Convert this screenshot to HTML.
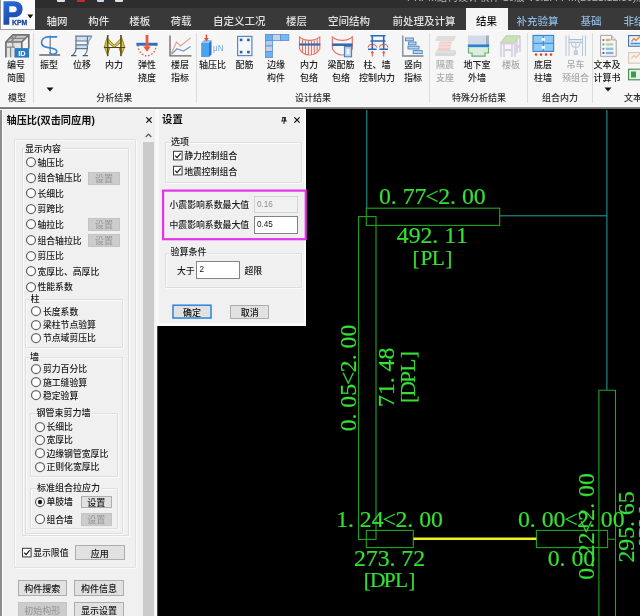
<!DOCTYPE html>
<html lang="zh-CN"><head><meta charset="utf-8"><title>PKPM</title>
<style>
html,body{margin:0;padding:0;background:#000;}
#app{position:relative;transform:translateZ(0);will-change:transform;width:640px;height:616px;overflow:hidden;background:#000;font-family:"Liberation Sans","Noto Sans CJK SC",sans-serif;font-size:9px;color:#111;line-height:12px}
#app div,#app span,#app svg{position:absolute;box-sizing:border-box;white-space:nowrap}
.t{height:12px;line-height:12px;font-size:8.85px;color:#1a1a1a;font-weight:500}
.tab{top:14px;height:14px;line-height:14px;font-size:10.5px;color:#e2e2e2;font-weight:500}
.tabb{color:#8fb6df}
.rl{height:12px;line-height:12px;font-size:9px;color:#1c1c1c;text-align:center;font-weight:500}
.rl.dis{color:#a9a9a9}
.gl{top:91.5px;height:12px;line-height:12px;font-size:9px;color:#2e2e2e;font-weight:500;text-align:center}
.sep{top:33px;width:1px;height:70px;background:#dcdcdc}
.gb{border:1px solid #dedede;border-radius:1px;box-shadow:1px 1px 0 #fafafa, inset 1px 1px 0 #fafafa}
.lg{height:12px;line-height:12px;font-size:9px;color:#1a1a1a;background:#f0f0f0;padding:0 1px;font-weight:500}
.btn{border:1px solid #adadad;background:#e1e1e1;font-size:9px;text-align:center;color:#111;font-weight:500}
.btn.dis{background:#cccccc;border-color:#c4c4c4;color:#9a9a9a}
.btn.def{border-color:#e1e1e1}
.inp{border:1px solid #848484;background:#fff;font-size:8.2px;color:#111;padding-left:2.4px}
.inp.dis{background:#f0f0f0;border-color:#d4d4d4;color:#8e8e8e}
</style></head>
<body><div id="app">
<div style="left:0;top:0;width:640px;height:30px;background:#393939"></div>
<div style="left:0;top:0;width:640px;height:7.6px;background:#2d2d2d"></div>
<div style="left:407px;top:-10px;height:14px;line-height:14px;font-size:10.5px;color:#b4b4b4">PKPM结构设计软件 10版 V5.2.4 PM(2021.12.30)版本</div>
<div style="left:57px;top:-4px;width:7.5px;height:6.2px;background:#e0e0e0;border-radius:1px"></div>
<div style="left:77px;top:-4px;width:7.5px;height:6.2px;background:#c82a2a;border-radius:1px"></div>
<div style="left:96.5px;top:-4px;width:7.5px;height:6.2px;background:#c6d8ee;border-radius:1px"></div>
<div style="left:115px;top:-4px;width:7.5px;height:6.2px;background:#e0e0e0;border-radius:1px"></div>
<div style="left:0;top:0;width:34.6px;height:30px;background:#fbfbfb"></div>
<svg style="left:0;top:0" width="35" height="30" viewBox="0 0 35 30">
<defs><linearGradient id="lg1" x1="0" y1="0" x2="0.3" y2="1"><stop offset="0" stop-color="#2b78e0"/><stop offset="1" stop-color="#1a3fa6"/></linearGradient></defs>
<text x="2" y="24.3" font-family="Liberation Sans, sans-serif" font-weight="bold" font-size="32" fill="url(#lg1)" stroke="url(#lg1)" stroke-width="1.3" stroke-linejoin="miter" textLength="21" lengthAdjust="spacingAndGlyphs">P</text>
<text x="12" y="24.8" font-family="Liberation Sans, sans-serif" font-weight="bold" font-size="7.6" fill="#1c429f" stroke="#1c429f" stroke-width="0.3" textLength="15.3" lengthAdjust="spacingAndGlyphs">KPM</text>
<path d="M27.4 14.5 H33.2 L30.3 18.6 Z" fill="#111"/>
<path d="M0.5 0 V29.6 H34.6" stroke="#4a4a4a" stroke-width="1" fill="none" opacity=".55"/>
</svg>
<div class="tab" style="left:46.6px">轴网</div>
<div class="tab" style="left:88.2px">构件</div>
<div class="tab" style="left:129.3px">楼板</div>
<div class="tab" style="left:170.4px">荷载</div>
<div class="tab" style="left:213px">自定义工况</div>
<div class="tab" style="left:286px">楼层</div>
<div class="tab" style="left:328px">空间结构</div>
<div class="tab" style="left:392.5px">前处理及计算</div>
<div style="left:466px;top:8px;width:42px;height:23px;background:#f5f5f5"></div>
<div class="tab" style="left:476px;color:#111">结果</div>
<div class="tab tabb" style="left:516.6px">补充验算</div>
<div class="tab tabb" style="left:580.6px">基础</div>
<div class="tab tabb" style="left:623.6px">非结构构件</div>
<div style="left:0;top:29.6px;width:640px;height:77.4px;background:#f6f6f6"></div>
<div style="left:34.6px;top:29.8px;width:606px;height:1.4px;background:#fff"></div>
<div style="left:0;top:105.6px;width:640px;height:1.4px;background:#fbfbfb"></div>
<div style="left:0;top:106.9px;width:640px;height:2px;background:linear-gradient(#8e8e8e,#6e6e6e)"></div>
<div class="sep" style="left:33px"></div>
<div class="sep" style="left:196px"></div>
<div class="sep" style="left:429px"></div>
<div class="sep" style="left:527px"></div>
<div class="sep" style="left:592px"></div>
<div class="rl" style="left:-14px;top:59px;width:60px">编号</div>
<div class="rl" style="left:-14px;top:71.7px;width:60px">简图</div>
<div class="rl" style="left:19px;top:59px;width:60px">振型</div>
<div class="rl" style="left:52px;top:59px;width:60px">位移</div>
<div class="rl" style="left:84px;top:59px;width:60px">内力</div>
<div class="rl" style="left:117px;top:59px;width:60px">弹性</div>
<div class="rl" style="left:117px;top:71.7px;width:60px">挠度</div>
<div class="rl" style="left:150px;top:59px;width:60px">楼层</div>
<div class="rl" style="left:150px;top:71.7px;width:60px">指标</div>
<div class="rl" style="left:182.5px;top:59px;width:60px">轴压比</div>
<div class="rl" style="left:214.5px;top:59px;width:60px">配筋</div>
<div class="rl" style="left:246px;top:59px;width:60px">边缘</div>
<div class="rl" style="left:246px;top:71.7px;width:60px">构件</div>
<div class="rl" style="left:279px;top:59px;width:60px">内力</div>
<div class="rl" style="left:279px;top:71.7px;width:60px">包络</div>
<div class="rl" style="left:311px;top:59px;width:60px">梁配筋</div>
<div class="rl" style="left:311px;top:71.7px;width:60px">包络</div>
<div class="rl" style="left:347px;top:59px;width:60px">柱、墙</div>
<div class="rl" style="left:347px;top:71.7px;width:60px">控制内力</div>
<div class="rl" style="left:383px;top:59px;width:60px">竖向</div>
<div class="rl" style="left:383px;top:71.7px;width:60px">指标</div>
<div class="rl dis" style="left:415px;top:59px;width:60px">隔震</div>
<div class="rl dis" style="left:415px;top:71.7px;width:60px">支座</div>
<div class="rl" style="left:447px;top:59px;width:60px">地下室</div>
<div class="rl" style="left:447px;top:71.7px;width:60px">外墙</div>
<div class="rl dis" style="left:481px;top:59px;width:60px">楼板</div>
<div class="rl" style="left:513px;top:59px;width:60px">底层</div>
<div class="rl" style="left:513px;top:71.7px;width:60px">柱墙</div>
<div class="rl dis" style="left:545.5px;top:59px;width:60px">吊车</div>
<div class="rl dis" style="left:545.5px;top:71.7px;width:60px">预组合</div>
<div class="rl" style="left:577px;top:59px;width:60px">文本及</div>
<div class="rl" style="left:577px;top:71.7px;width:60px">计算书</div>
<div class="gl" style="left:-23px;width:80px">模型</div>
<div class="gl" style="left:74.2px;width:80px">分析结果</div>
<div class="gl" style="left:273px;width:80px">设计结果</div>
<div class="gl" style="left:439px;width:80px">特殊分析结果</div>
<div class="gl" style="left:520px;width:80px">组合内力</div>
<div class="gl" style="left:602px;width:80px">文本结果</div>
<svg style="left:46px;top:87px" width="8" height="5" viewBox="0 0 8 5"><path d="M0.5 0.5 H7.5 L4 4.5 Z" fill="#111"/></svg>
<svg style="left:604px;top:87px" width="8" height="5" viewBox="0 0 8 5"><path d="M0.5 0.5 H7.5 L4 4.5 Z" fill="#111"/></svg>
<svg style="left:0;top:30px" width="640" height="75" viewBox="0 30 640 75">
<!-- 1 编号简图 -->
<path d="M5.6 42 L12.8 34.6 H29 L21.8 42 Z" fill="#c9c9c9"/>
<path d="M6 43 H21.5 V49 H15 V57 H6 Z" fill="#dedede" opacity=".8"/>
<g fill="none" stroke="#727272" stroke-width="1.7">
<path d="M5.9 57.6 V42 L12.8 34.8 H28.8 V48.6"/>
<path d="M5.9 42 H21.8 L28.8 34.8 M21.8 42 V48.6"/>
<path d="M12.8 35 V47 M9.3 38.4 H25.3 M5.9 47.2 H15 M17.3 35 L10.4 42 M10.6 57.6 V47.6" stroke-width="1.2" stroke="#858585"/>
</g>
<rect x="14.5" y="48.1" width="14.6" height="9.5" fill="#2a7cc0"/>
<text x="21.9" y="55.7" font-family="'Liberation Sans',sans-serif" font-weight="bold" font-size="7.4" fill="#fff" text-anchor="middle">ID</text>
<!-- 2 振型 -->
<path d="M39.3 55 H60.2" stroke="#707070" stroke-width="1.6" fill="none"/>
<path d="M50.2 35.6 V54.5" stroke="#7d8b9c" stroke-width="1.4" fill="none"/>
<path d="M57.2 36.9 H48.5 C44 37 41.5 39.6 41.5 42.6 C41.5 45.8 44.6 47.2 48.4 47.6 C53 48.1 56.8 49.4 56.8 51.6 C56.8 53.6 54.4 54.6 52 54.2 C50.6 53.9 50 53.2 50.2 52.2" stroke="#3a82d2" stroke-width="1.6" fill="none"/>
<!-- 3 位移 -->
<path d="M76 36.2 H91.5 L88 41 H76 Z M76 44.6 H87.5 L87.2 48.6 H76 Z" fill="#c4dbf3" opacity=".8"/>
<g fill="none" stroke="#5f7791" stroke-width="1.2">
<path d="M75.2 36.2 H92 M75.6 41 H88.6 M75.6 44.8 H87.8 M75.2 48.6 H87.6"/>
<path d="M76 36.2 V48.6 C76 51.5 74.6 53.6 72.4 55.4 M87.4 36.2 V48.6 C87.4 51.5 86.2 53.6 84.4 55.4"/>
<path d="M92 36.2 C89.5 39 88.2 42 87.6 46" stroke="#7f9fc6"/>
</g>
<path d="M71 55.6 H76.5 M82.6 55.6 H88" stroke="#4e5a68" stroke-width="1.3"/>
<!-- 4 内力 -->
<g fill="#dcc63e" stroke="#6a5c1c" stroke-width=".7" stroke-linejoin="round">
<path d="M107.8 35 L104.2 47.5 H107.8 Z"/><path d="M120.9 35 L124.8 47.5 H120.9 Z"/>
<path d="M107.8 38.5 L114.3 45.2 L120.9 38.5 V42.5 L114.3 47.5 L107.8 42.5 Z"/>
<path d="M104.6 47.5 H107.8 V56 Z"/><path d="M124.4 47.5 H120.9 V56 Z"/>
<path d="M107.8 47.5 H110 L107.8 53 Z"/><path d="M120.9 47.5 H118.8 L120.9 53 Z"/>
</g>
<path d="M107.8 35 V56.3 M120.9 35 V56.3 M104 47.5 H125.2" stroke="#4b4216" stroke-width="1.1" fill="none"/>
<!-- 5 弹性挠度 -->
<path d="M138 45.2 A9 10.6 0 0 0 156 45.2" stroke="#e2564a" stroke-width="1.3" stroke-dasharray="1.6 1.7" fill="none"/>
<rect x="136.4" y="42.8" width="21.2" height="2.9" fill="#2c70ba"/>
<path d="M145.6 35 H148.4 V46.5 H150.8 L147 51.8 L143.2 46.5 H145.6 Z" fill="#ea5a3c"/>
<!-- 6 楼层指标 -->
<path d="M170 35.5 V55.8 H191.5" stroke="#6d6264" stroke-width="1.3" fill="none"/>
<path d="M171.5 53 L176.5 42 L180.5 46 L190.5 38" stroke="#e3a592" stroke-width="1.2" fill="none"/>
<path d="M171.5 54.2 L177 48.8 L183.5 51 L190.5 46.5" stroke="#7a97c6" stroke-width="1.2" fill="none"/>
<!-- 7 轴压比 -->
<path d="M201.5 43 L204 40.5 H211.5 V54.5 L209 57 H201.5 Z" fill="#2b74c6"/>
<rect x="201.5" y="43" width="7.5" height="14" fill="#4aa3ee"/>
<path d="M201.5 43 L204 40.5 H211.5 L209 43 Z" fill="#8cc6f6"/>
<path d="M205.7 34.5 H207.1 V38 H208.8 L206.4 41.6 L204 38 H205.7 Z" fill="#e24a3a"/>
<text x="213" y="51" font-family="'Liberation Sans',sans-serif" font-size="9.5" fill="#6fa8e0" textLength="10.5" lengthAdjust="spacingAndGlyphs">μN</text>
<!-- 8 配筋 -->
<rect x="237.6" y="36.4" width="14.3" height="19.2" fill="#f4f8fd" stroke="#5f86b8" stroke-width="1.2"/>
<g fill="#2f5f9e"><rect x="239.8" y="38.6" width="2.6" height="2.6"/><rect x="247.1" y="38.6" width="2.6" height="2.6"/><rect x="239.8" y="50.8" width="2.6" height="2.6"/><rect x="247.1" y="50.8" width="2.6" height="2.6"/></g>
<!-- 9 边缘构件 -->
<g stroke="#5b8fcc" stroke-width="0.8">
<rect x="265.4" y="34.4" width="7" height="6.2" fill="#6aaef0"/>
<rect x="272.4" y="34.4" width="8" height="6.2" fill="#c3d3e6"/>
<rect x="280.4" y="34.4" width="8.4" height="6.2" fill="#7ab6f0"/>
<rect x="265.4" y="40.6" width="7" height="5.4" fill="#a9cdf3"/>
<rect x="265.4" y="46" width="7" height="5.4" fill="#c9d2dc"/>
<rect x="265.4" y="51.4" width="7" height="6.2" fill="#6fb0f0"/>
</g>
<!-- 10 内力包络 -->
<g fill="none" stroke="#e27767" stroke-width="1.1">
<path d="M299.5 37 C305 41.5 314 41.5 319.8 37 V49 C315 57 304 57 299.5 49 Z" fill="#fdf3f1"/>
<path d="M302.5 39.5 V52.5 M305.5 40.5 V54.3 M308.5 40.7 V55 M311.5 40.7 V55 M314.3 40.3 V54.3 M317.2 39.3 V52.3"/>
</g>
<rect x="299" y="43.4" width="21.3" height="2.2" fill="#3a68b2"/>
<!-- 11 梁配筋包络 -->
<path d="M332.4 37 C338 41.5 346.5 41.5 352.3 37 V49 C347.5 57 337 57 332.4 49 Z" fill="#fdf6f5" stroke="#e27767" stroke-width="1.2"/>
<rect x="332" y="43.4" width="20.6" height="2.6" fill="#3a68b2"/>
<rect x="344.4" y="46.6" width="7.2" height="10.2" fill="#b9d2ee" stroke="#4678b8" stroke-width="1"/>
<rect x="346.7" y="49" width="2.6" height="5.4" fill="#f4f8fd"/>
<!-- 12 柱墙控制内力 -->
<path d="M370.5 35.8 H385.5 M370.5 41 H385.5 M372.3 35 V49.5 M383.7 35 V49.5 M368 49.2 H376.6 M379.4 49.2 H388" stroke="#2b68bc" stroke-width="1.6" fill="none"/>
<g stroke="#e5574d" stroke-width="1.1" fill="none">
<path d="M368 47.5 C368.5 44.8 370.5 44 372 45 M376.6 47.5 C376 44.8 374 44 372.6 45 M379.4 47.5 C380 44.8 382 44 383.4 45 M388 47.5 C387.5 44.8 385.5 44 384 45"/>
<path d="M372.3 56.5 V52 M383.7 56.5 V52"/>
</g>
<path d="M370.5 53.2 L372.3 50.6 L374.1 53.2 Z M381.9 53.2 L383.7 50.6 L385.5 53.2 Z" fill="#e5574d"/>
<!-- 13 竖向指标 -->
<path d="M402.8 35.5 V56 H423.5" stroke="#7b8794" stroke-width="1.3" fill="none"/>
<g fill="#b6d6f2" stroke="#4c84bb" stroke-width="0.9">
<rect x="405.4" y="38" width="8" height="2.8"/><rect x="408.6" y="42" width="7.4" height="2.8"/><rect x="408" y="46.2" width="11" height="2.8"/><rect x="413.2" y="50.6" width="9" height="3"/>
</g>
<!-- 14 隔震支座 (disabled) -->
<g opacity=".75">
<path d="M437 36 H456 L454 41 H435.3 Z" fill="#d6d6d6"/>
<path d="M439.5 41.5 H452 L450 50 H437.5 Z" fill="#f3bcb4"/>
<path d="M438.7 44 H451.3 M438 47 H450.7" stroke="#fbe6e2" stroke-width="1"/>
<path d="M437 50 H456 V54 L454 56 H435.3 V52 Z" fill="#cfcfcf"/>
<path d="M435.3 52 H454 L456 50" stroke="#eee" stroke-width=".8" fill="none"/>
</g>
<!-- 15 地下室外墙 -->
<rect x="468" y="35.5" width="18.5" height="8.8" fill="#d3d9e6"/>
<rect x="486" y="35.5" width="3" height="10" fill="#a9aebb"/>
<rect x="467.8" y="44.4" width="21.4" height="3" fill="#2c80d2"/>
<path d="M468.5 47.6 V53 H472 V56.2 H485 V53 H488.5 V47.6" fill="#dbeedd" stroke="#6fab76" stroke-width="1.2"/>
<!-- 16 楼板 (disabled) -->
<g opacity=".8">
<path d="M500.5 42.5 L506 35.8 H520 L515 42.5 Z" fill="#b9e29c" stroke="#b4b6bd" stroke-width=".9"/>
<path d="M501 42.8 V57 M504 42.8 V57 M512 42.8 V57 M515 42.8 V57 M517 40.5 V53 M520 36 V52" stroke="#b6b0c0" stroke-width="1.1" fill="none"/>
<path d="M501 43.6 H515 M504 50 H512 M515 50 L520 45" stroke="#d9bfe4" stroke-width="2" fill="none"/>
</g>
<!-- 17 底层柱墙 -->
<rect x="533" y="35.4" width="20.6" height="16" fill="#8fcaf8" stroke="#3b82cb" stroke-width="1.1"/>
<path d="M533 43.3 H553.6 M543.3 35.4 V51.4" stroke="#3b82cb" stroke-width="1"/>
<rect x="541.6" y="38" width="3.4" height="2.8" fill="#f2f8ff"/><rect x="541.6" y="46" width="3.4" height="2.8" fill="#f2f8ff"/>
<g fill="#e3432f"><circle cx="536" cy="54.6" r="1.3"/><circle cx="541" cy="54.6" r="1.3"/><circle cx="546" cy="54.6" r="1.3"/><circle cx="551" cy="54.6" r="1.3"/></g>
<!-- 18 吊车预组合 (disabled) -->
<g fill="none" stroke="#b4c3d3" stroke-width="1.1" opacity=".9">
<path d="M566 35.5 V56 M569 35.5 V56 M582.5 35.5 V56 M585.5 35.5 V56"/>
<path d="M569 39.6 H582.5 M569 42.4 H582.5" stroke="#9fbbd8" stroke-width="1.4"/>
<path d="M575.8 42.4 V52 M571.5 42.5 C571.5 46 573.5 47.5 575.8 47.5 C578 47.5 580 46 580 42.5"/>
<rect x="574.3" y="51" width="3" height="3.4" fill="#c8d6e4"/>
</g>
<!-- 19 文本及计算书 -->
<path d="M600.6 35.4 H611.5 L616.2 40 V56.3 H600.6 Z" fill="#f7f7f7" stroke="#a3a3a3" stroke-width="1"/>
<path d="M611.5 35.4 V40 H616.2" fill="#e3e3e3" stroke="#a3a3a3" stroke-width=".9"/>
<g><circle cx="603.4" cy="40" r="1.1" fill="#8a6a5a"/><circle cx="603.4" cy="44.4" r="1.1" fill="#74a879"/><circle cx="603.4" cy="48.8" r="1.1" fill="#5f8fc8"/><circle cx="603.4" cy="53" r="1.1" fill="#34507e"/>
<rect x="605.8" y="38.8" width="4.6" height="2.4" fill="#eca386"/><rect x="605.8" y="43.2" width="7.6" height="2.4" fill="#a9d9ab"/><rect x="605.8" y="47.6" width="7.6" height="2.4" fill="#94bbe4"/><rect x="605.8" y="51.8" width="7.6" height="2.4" fill="#86aedc"/></g>
<!-- 20 right small icons -->
<rect x="628.6" y="35.6" width="12" height="10.6" fill="#eef4fb" stroke="#3c6fae" stroke-width="1.1"/>
<path d="M630.5 43.5 H640" stroke="#3c8fe0" stroke-width="1.6"/>
<path d="M631.5 41.5 L634 38.5 L636 40.5 L640 36.5" stroke="#e78a3c" stroke-width="1.5" fill="none"/>
<g opacity=".55"><rect x="628.6" y="52.6" width="12" height="10.6" fill="#f6efe6" stroke="#b9a489" stroke-width="1.1"/>
<path d="M631.5 58.5 L634 55.5 L636 57.5 L640 53.5" stroke="#e7a35c" stroke-width="1.5" fill="none"/></g>
<rect x="628.6" y="69.2" width="12" height="10.6" fill="#e7f3e8" stroke="#3d8a4a" stroke-width="1.1"/>
<rect x="631" y="71.5" width="5" height="6" fill="#3d9a4d"/>
</svg>

<div style="left:0;top:109px;width:157px;height:507px;background:#f0f0f0"></div>
<div style="left:0;top:109px;width:1.9px;height:507px;background:#8c8c8c"></div>
<div style="left:1.9px;top:109px;width:1.4px;height:507px;background:#fcfcfc"></div>
<div class="t" style="left:6.5px;top:114.5px;font-weight:bold;font-size:10.2px;letter-spacing:0;color:#111">轴压比(双击同应用)</div>
<svg style="left:144.5px;top:116px" width="8" height="8" viewBox="0 0 8 8"><path d="M1.4 1.4 L6.6 6.6 M6.6 1.4 L1.4 6.6" stroke="#111" stroke-width="1.3" fill="none"/></svg>
<div style="left:0;top:108.9px;width:306px;height:1.2px;background:#fafafa"></div>
<div style="left:154.6px;top:109px;width:3px;height:507px;background:#f8f8f8"></div>
<svg style="left:145px;top:132.5px" width="7" height="5" viewBox="0 0 7 5"><path d="M0.7 4 L3.5 1.2 L6.3 4" stroke="#555" stroke-width="1.2" fill="none"/></svg>
<div style="left:143.2px;top:141.5px;width:11px;height:476px;background:#cbcbcb"></div>
<div class="gb" style="left:14px;top:139px;width:122px;height:429px;border-color:#e2e2e2"></div>
<div class="gb" style="left:22px;top:148px;width:107px;height:388px"></div>
<div class="lg" style="left:24px;top:143px">显示内容</div>
<svg style="left:24.6px;top:156.4px" width="12" height="12" viewBox="0 0 12 12"><circle cx="6" cy="6" r="4.5" fill="#fdfdfd" stroke="#626262" stroke-width="1.25"/></svg>
<div class="t" style="left:37.4px;top:156.5px">轴压比</div>
<svg style="left:24.6px;top:171.9px" width="12" height="12" viewBox="0 0 12 12"><circle cx="6" cy="6" r="4.5" fill="#fdfdfd" stroke="#626262" stroke-width="1.25"/></svg>
<div class="t" style="left:37.4px;top:172px">组合轴压比</div>
<div class="btn dis" style="left:88px;top:171.5px;width:32px;height:13.0px;line-height:13.6px">设置</div>
<svg style="left:24.6px;top:187.4px" width="12" height="12" viewBox="0 0 12 12"><circle cx="6" cy="6" r="4.5" fill="#fdfdfd" stroke="#626262" stroke-width="1.25"/></svg>
<div class="t" style="left:37.4px;top:187.5px">长细比</div>
<svg style="left:24.6px;top:202.9px" width="12" height="12" viewBox="0 0 12 12"><circle cx="6" cy="6" r="4.5" fill="#fdfdfd" stroke="#626262" stroke-width="1.25"/></svg>
<div class="t" style="left:37.4px;top:203px">剪跨比</div>
<svg style="left:24.6px;top:218.4px" width="12" height="12" viewBox="0 0 12 12"><circle cx="6" cy="6" r="4.5" fill="#fdfdfd" stroke="#626262" stroke-width="1.25"/></svg>
<div class="t" style="left:37.4px;top:218.5px">轴拉比</div>
<div class="btn dis" style="left:88px;top:218px;width:32px;height:13px;line-height:13.6px">设置</div>
<svg style="left:24.6px;top:234.4px" width="12" height="12" viewBox="0 0 12 12"><circle cx="6" cy="6" r="4.5" fill="#fdfdfd" stroke="#626262" stroke-width="1.25"/></svg>
<div class="t" style="left:37.4px;top:234.5px">组合轴拉比</div>
<div class="btn dis" style="left:88px;top:234px;width:32px;height:13px;line-height:13.6px">设置</div>
<svg style="left:24.6px;top:249.9px" width="12" height="12" viewBox="0 0 12 12"><circle cx="6" cy="6" r="4.5" fill="#fdfdfd" stroke="#626262" stroke-width="1.25"/></svg>
<div class="t" style="left:37.4px;top:250px">剪压比</div>
<svg style="left:24.6px;top:265.4px" width="12" height="12" viewBox="0 0 12 12"><circle cx="6" cy="6" r="4.5" fill="#fdfdfd" stroke="#626262" stroke-width="1.25"/></svg>
<div class="t" style="left:37.4px;top:265.5px">宽厚比、高厚比</div>
<svg style="left:24.6px;top:280.9px" width="12" height="12" viewBox="0 0 12 12"><circle cx="6" cy="6" r="4.5" fill="#fdfdfd" stroke="#626262" stroke-width="1.25"/></svg>
<div class="t" style="left:37.4px;top:281px">性能系数</div>
<div class="gb" style="left:25px;top:298.8px;width:98px;height:49.2px"></div>
<div class="lg" style="left:29.6px;top:293px">柱</div>
<svg style="left:30.1px;top:305.4px" width="12" height="12" viewBox="0 0 12 12"><circle cx="6" cy="6" r="4.5" fill="#fdfdfd" stroke="#626262" stroke-width="1.25"/></svg>
<div class="t" style="left:42.9px;top:305.5px">长度系数</div>
<svg style="left:30.1px;top:318.9px" width="12" height="12" viewBox="0 0 12 12"><circle cx="6" cy="6" r="4.5" fill="#fdfdfd" stroke="#626262" stroke-width="1.25"/></svg>
<div class="t" style="left:42.9px;top:319px">梁柱节点验算</div>
<svg style="left:30.1px;top:331.9px" width="12" height="12" viewBox="0 0 12 12"><circle cx="6" cy="6" r="4.5" fill="#fdfdfd" stroke="#626262" stroke-width="1.25"/></svg>
<div class="t" style="left:42.9px;top:332px">节点域剪压比</div>
<div class="gb" style="left:25px;top:357px;width:98px;height:177px"></div>
<div class="lg" style="left:29px;top:351px">墙</div>
<svg style="left:30.1px;top:362.9px" width="12" height="12" viewBox="0 0 12 12"><circle cx="6" cy="6" r="4.5" fill="#fdfdfd" stroke="#626262" stroke-width="1.25"/></svg>
<div class="t" style="left:42.9px;top:363px">剪力百分比</div>
<svg style="left:30.1px;top:376.4px" width="12" height="12" viewBox="0 0 12 12"><circle cx="6" cy="6" r="4.5" fill="#fdfdfd" stroke="#626262" stroke-width="1.25"/></svg>
<div class="t" style="left:42.9px;top:376.5px">施工缝验算</div>
<svg style="left:30.1px;top:389.4px" width="12" height="12" viewBox="0 0 12 12"><circle cx="6" cy="6" r="4.5" fill="#fdfdfd" stroke="#626262" stroke-width="1.25"/></svg>
<div class="t" style="left:42.9px;top:389.5px">稳定验算</div>
<div class="gb" style="left:30px;top:413px;width:88px;height:64px"></div>
<div class="lg" style="left:35.5px;top:407px">钢管束剪力墙</div>
<svg style="left:33.6px;top:420.9px" width="12" height="12" viewBox="0 0 12 12"><circle cx="6" cy="6" r="4.5" fill="#fdfdfd" stroke="#626262" stroke-width="1.25"/></svg>
<div class="t" style="left:46.4px;top:421px">长细比</div>
<svg style="left:33.6px;top:433.9px" width="12" height="12" viewBox="0 0 12 12"><circle cx="6" cy="6" r="4.5" fill="#fdfdfd" stroke="#626262" stroke-width="1.25"/></svg>
<div class="t" style="left:46.4px;top:434px">宽厚比</div>
<svg style="left:33.6px;top:447.4px" width="12" height="12" viewBox="0 0 12 12"><circle cx="6" cy="6" r="4.5" fill="#fdfdfd" stroke="#626262" stroke-width="1.25"/></svg>
<div class="t" style="left:46.4px;top:447.5px">边缘钢管宽厚比</div>
<svg style="left:33.6px;top:460.9px" width="12" height="12" viewBox="0 0 12 12"><circle cx="6" cy="6" r="4.5" fill="#fdfdfd" stroke="#626262" stroke-width="1.25"/></svg>
<div class="t" style="left:46.4px;top:461px">正则化宽厚比</div>
<div class="gb" style="left:30px;top:488px;width:88px;height:41px"></div>
<div class="lg" style="left:36px;top:482px">标准组合拉应力</div>
<svg style="left:33.6px;top:495.9px" width="12" height="12" viewBox="0 0 12 12"><circle cx="6" cy="6" r="4.5" fill="#fdfdfd" stroke="#626262" stroke-width="1.25"/><circle cx="6" cy="6" r="2.2" fill="#1c1c1c"/></svg>
<div class="t" style="left:46.4px;top:496px">单肢墙</div>
<div class="btn " style="left:80.5px;top:495.5px;width:31.5px;height:12.5px;line-height:13.1px">设置</div>
<svg style="left:33.6px;top:513.4px" width="12" height="12" viewBox="0 0 12 12"><circle cx="6" cy="6" r="4.5" fill="#fdfdfd" stroke="#626262" stroke-width="1.25"/></svg>
<div class="t" style="left:46.4px;top:513.5px">组合墙</div>
<div class="btn dis" style="left:80.5px;top:513px;width:31.5px;height:13px;line-height:13.6px">设置</div>
<svg style="left:21px;top:547px" width="12" height="12" viewBox="0 0 12 12"><rect x="1.5" y="1.3" width="8.6" height="8.6" fill="#fefefe" stroke="#3a3a3a" stroke-width="1"/><path d="M3.2 5.7 L5.1 7.7 L8.6 3.3" stroke="#111" stroke-width="1.1" fill="none"/></svg>
<div class="t" style="left:33.2px;top:547.3px">显示限值</div>
<div class="btn " style="left:75px;top:544.6px;width:49.5px;height:15.7px;line-height:16.3px">应用</div>
<div class="btn " style="left:17.5px;top:580px;width:49.5px;height:15.5px;line-height:16.1px">构件搜索</div>
<div class="btn " style="left:74px;top:580px;width:50px;height:15.5px;line-height:16.1px">构件信息</div>
<div class="btn dis" style="left:17.5px;top:602px;width:49.5px;height:16px;line-height:16.6px">初始构形</div>
<div class="btn " style="left:74px;top:602px;width:50px;height:16px;line-height:16.6px">显示设置</div>
<div style="left:157px;top:109px;width:149.3px;height:217px;background:#fafafa"></div>
<div style="left:159px;top:110.2px;width:145px;height:213.3px;background:#f0f0f0"></div>
<div class="t" style="left:162px;top:114px;font-weight:bold;font-size:10.4px;color:#111">设置</div>
<svg style="left:279.5px;top:116px" width="8" height="9" viewBox="0 0 8 9"><path d="M2.2 1.5 H5.8 M2.7 1.5 V5 M5.3 1.5 V5 M1.2 5 H6.8 M4 5 V8" stroke="#222" stroke-width="1" fill="none"/><path d="M4.6 1.5 V5" stroke="#222" stroke-width="1.2"/></svg>
<svg style="left:293.2px;top:116px" width="8" height="8" viewBox="0 0 8 8"><path d="M1.4 1.4 L6.6 6.6 M6.6 1.4 L1.4 6.6" stroke="#111" stroke-width="1.3" fill="none"/></svg>
<div class="gb" style="left:165px;top:141.5px;width:137px;height:41.5px"></div>
<div class="lg" style="left:170px;top:135.5px">选项</div>
<svg style="left:172px;top:149.5px" width="12" height="12" viewBox="0 0 12 12"><rect x="1.5" y="1.3" width="8.6" height="8.6" fill="#fefefe" stroke="#3a3a3a" stroke-width="1"/><path d="M3.2 5.7 L5.1 7.7 L8.6 3.3" stroke="#111" stroke-width="1.1" fill="none"/></svg>
<div class="t" style="left:184.2px;top:149.8px">静力控制组合</div>
<svg style="left:172px;top:165.2px" width="12" height="12" viewBox="0 0 12 12"><rect x="1.5" y="1.3" width="8.6" height="8.6" fill="#fefefe" stroke="#3a3a3a" stroke-width="1"/><path d="M3.2 5.7 L5.1 7.7 L8.6 3.3" stroke="#111" stroke-width="1.1" fill="none"/></svg>
<div class="t" style="left:184.2px;top:165.5px">地震控制组合</div>
<div class="t" style="left:169.5px;top:198.5px">小震影响系数最大值</div>
<div class="inp dis" style="left:253.6px;top:195.5px;width:44.6px;height:17px;line-height:15.6px">0.16</div>
<div class="t" style="left:169.5px;top:218.8px">中震影响系数最大值</div>
<div class="inp" style="left:253.6px;top:216.4px;width:44.6px;height:17.4px;line-height:16px">0.45</div>
<div class="gb" style="left:165px;top:252.5px;width:137px;height:35.7px"></div>
<div class="lg" style="left:169.5px;top:246px">验算条件</div>
<div class="t" style="left:177px;top:264.5px">大于</div>
<div class="inp" style="left:196.2px;top:261.4px;width:44px;height:17.4px;line-height:16px">2</div>
<div class="t" style="left:244.5px;top:264.5px">超限</div>
<div class="btn def" style="left:172.3px;top:304.5px;width:39.4px;height:14.2px;line-height:14.8px">确定</div>
<svg style="left:171px;top:303px" width="42" height="17" viewBox="171 303 42 17"><rect x="173" y="305.2" width="38" height="12.8" fill="none" stroke="#2c85e2" stroke-width="1.5"/></svg>
<div class="btn " style="left:230px;top:304.5px;width:39.4px;height:14.2px;line-height:14.8px">取消</div>
<svg style="left:0;top:0" width="640" height="616" viewBox="0 0 640 616">
<path d="M157.3 326 H306.3 V109 H640 V616 H157.3 Z" fill="#000"/>
<rect x="163.1" y="190.6" width="142.6" height="48.6" fill="none" stroke="#e335e6" stroke-width="2.2"/>
<g fill="none" stroke="#25a0a2" stroke-width="1">
<path d="M366.8 110 V208 M606.9 110 V390 M499.7 215.8 H606.9"/>
</g>
<g fill="none" stroke="#1ea81e" stroke-width="1.1">
<rect x="366.3" y="208.2" width="133.4" height="17.2"/>
<rect x="358.6" y="216.6" width="17.4" height="322.8"/>
<rect x="366.3" y="530.4" width="47" height="17.2"/>
<rect x="536.4" y="530.4" width="71.2" height="17.2"/>
<path d="M598.9 620 V390.2 H615.5 V620 M607.6 539.3 H615.5"/>
</g>
<path d="M413.5 538.8 H536.3" stroke="#f2f21c" stroke-width="2.6" fill="none"/>
<g fill="#34e034" stroke="#34e034" stroke-width="0.2" font-family="'Liberation Serif','Noto Serif CJK SC',serif" font-size="23.8">
<text x="385.0 393.8 408.7 420.5 432.0 444.2 453.1 467.9 479.8" y="204.3" text-anchor="middle">0.77&lt;2.00</text>
<text x="402.8 414.6 426.5 435.3 450.2 462.0" y="243.2" text-anchor="middle">492.11</text>
<text x="416.0 426.5 438.3 448.8" y="264.5" font-size="21.4" text-anchor="middle">[PL]</text>
<text x="342.1 350.9 365.8 377.6 389.1 401.4 410.2 425.1 436.9" y="527.2" text-anchor="middle">1.24&lt;2.00</text>
<text x="359.9 371.7 383.6 392.4 407.3 419.1" y="566.4" text-anchor="middle">273.72</text>
<text x="367.3 377.8 389.6 401.5 411.9" y="586.5" font-size="21.4" text-anchor="middle">[DPL]</text>
<text x="523.9 532.8 547.6 559.4 570.9 583.1 592.0 606.8 618.7" y="527.2" text-anchor="middle">0.00&lt;2.00</text>
<text x="553.7 562.6 577.4 589.3" y="566.0" text-anchor="middle">0.00</text>
<text transform="translate(355.7 378) rotate(-90)" x="-47.4 -38.5 -23.7 -11.8 -0.4 11.8 20.7 35.5 47.4" y="0" text-anchor="middle">0.05&lt;2.00</text>
<text transform="translate(393.9 377.3) rotate(-90)" x="-23.7 -11.8 -3.0 11.8 23.7" y="0" text-anchor="middle">71.48</text>
<text transform="translate(414.8 377) rotate(-90)" x="-22.3 -11.8 0.0 11.8 22.3" y="0" font-size="21.4" text-anchor="middle">[DPL]</text>
<text transform="translate(594.3 526.5) rotate(-90)" x="-47.4 -38.5 -23.7 -11.8 -0.4 11.8 20.7 35.5 47.4" y="0" text-anchor="middle">0.22&lt;2.00</text>
<text transform="translate(633.6 527) rotate(-90)" x="-29.6 -17.8 -5.9 2.9 17.8 29.6" y="0" text-anchor="middle">295.65</text>
<text transform="translate(653.4 526) rotate(-90)" x="-16.4 -5.9 5.9 16.4" y="0" font-size="21.4" text-anchor="middle">[PL]</text>
</g>
</svg>
</div></body></html>
